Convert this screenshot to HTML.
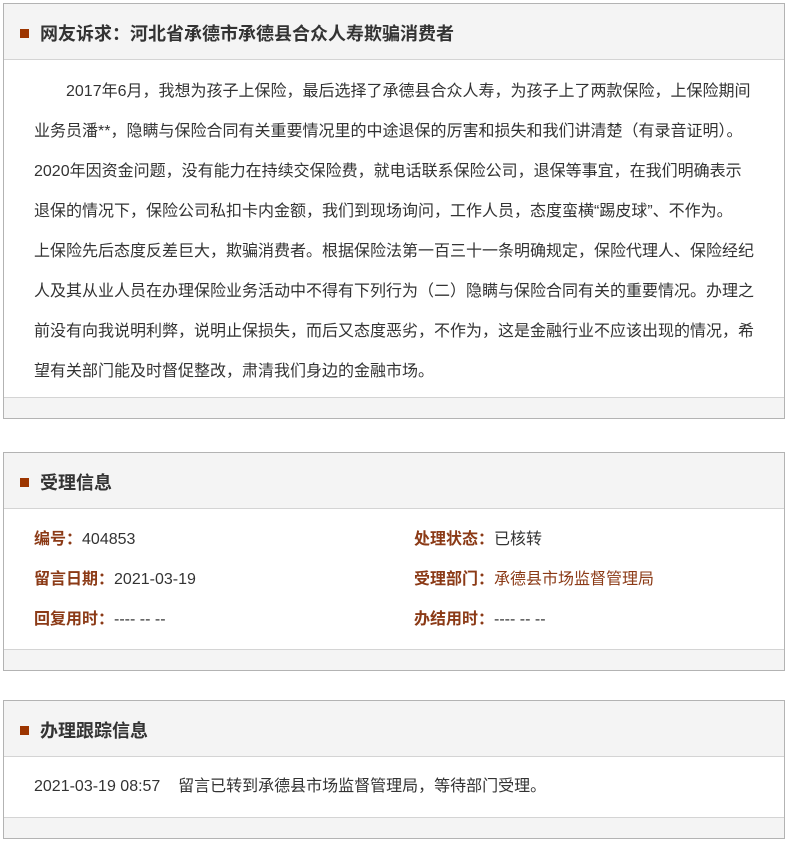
<!DOCTYPE html>
<html><head><meta charset="utf-8"><style>
body{margin:0;background:#fff;font-family:"Liberation Sans","Noto Sans CJK SC",sans-serif;color:#333;}
.box{position:absolute;left:3px;width:780px;border:1px solid #b3b3b3;background:#fff;}
.hd{height:55px;background:#f4f4f4;border-bottom:1px solid #d4d4d4;position:relative;}
.hd i{position:absolute;left:16px;top:25px;width:9px;height:9px;background:#9c3500;}
.hd b{position:absolute;left:36px;top:17px;font-size:18px;line-height:26px;color:#333;}
.ft{height:20px;background:#f4f4f4;border-top:1px solid #d4d4d4;}
.bd{padding:0 0 0 30px;font-size:16px;}
.l{height:40px;line-height:40px;white-space:nowrap;}
.lab{color:#8b3a16;font-weight:bold;}
.row{position:relative;height:40px;line-height:40px;font-size:16px;}
.row span{position:absolute;white-space:nowrap;}
</style></head><body>
<div class="box" style="top:3px;">
<div class="hd"><i></i><b>网友诉求：河北省承德市承德县合众人寿欺骗消费者</b></div>
<div class="bd" style="padding-top:12px;height:325px;">
<div class="l" style="padding-left:32px">2017年6月，我想为孩子上保险，最后选择了承德县合众人寿，为孩子上了两款保险，上保险期间</div>
<div class="l">业务员潘**，隐瞒与保险合同有关重要情况里的中途退保的厉害和损失和我们讲清楚（有录音证明）。</div>
<div class="l">2020年因资金问题，没有能力在持续交保险费，就电话联系保险公司，退保等事宜，在我们明确表示</div>
<div class="l">退保的情况下，保险公司私扣卡内金额，我们到现场询问，工作人员，态度蛮横“踢皮球”、不作为。</div>
<div class="l">上保险先后态度反差巨大，欺骗消费者。根据保险法第一百三十一条明确规定，保险代理人、保险经纪</div>
<div class="l">人及其从业人员在办理保险业务活动中不得有下列行为（二）隐瞒与保险合同有关的重要情况。办理之</div>
<div class="l">前没有向我说明利弊，说明止保损失，而后又态度恶劣，不作为，这是金融行业不应该出现的情况，希</div>
<div class="l">望有关部门能及时督促整改，肃清我们身边的金融市场。</div>
</div>
<div class="ft"></div>
</div>

<div class="box" style="top:452px;">
<div class="hd"><i></i><b>受理信息</b></div>
<div style="height:140px;padding-top:11px;box-sizing:border-box;">
<div class="row"><span style="left:30px"><span class="lab" style="position:static">编号：</span>404853</span><span style="left:410px"><span class="lab" style="position:static">处理状态：</span>已核转</span></div>
<div class="row"><span style="left:30px"><span class="lab" style="position:static">留言日期：</span>2021-03-19</span><span style="left:410px"><span class="lab" style="position:static">受理部门：</span><span style="position:static;color:#8b3a16">承德县市场监督管理局</span></span></div>
<div class="row"><span style="left:30px"><span class="lab" style="position:static">回复用时：</span>---- -- --</span><span style="left:410px"><span class="lab" style="position:static">办结用时：</span>---- -- --</span></div>
</div>
<div class="ft"></div>
</div>

<div class="box" style="top:700px;">
<div class="hd"><i></i><b>办理跟踪信息</b></div>
<div style="height:60px;position:relative;">
<div class="row" style="position:absolute;top:10px;left:30px;white-space:nowrap;">2021-03-19 08:57&nbsp;&nbsp;&nbsp;&nbsp;留言已转到承德县市场监督管理局，等待部门受理。</div>
</div>
<div class="ft"></div>
</div>
</body></html>
